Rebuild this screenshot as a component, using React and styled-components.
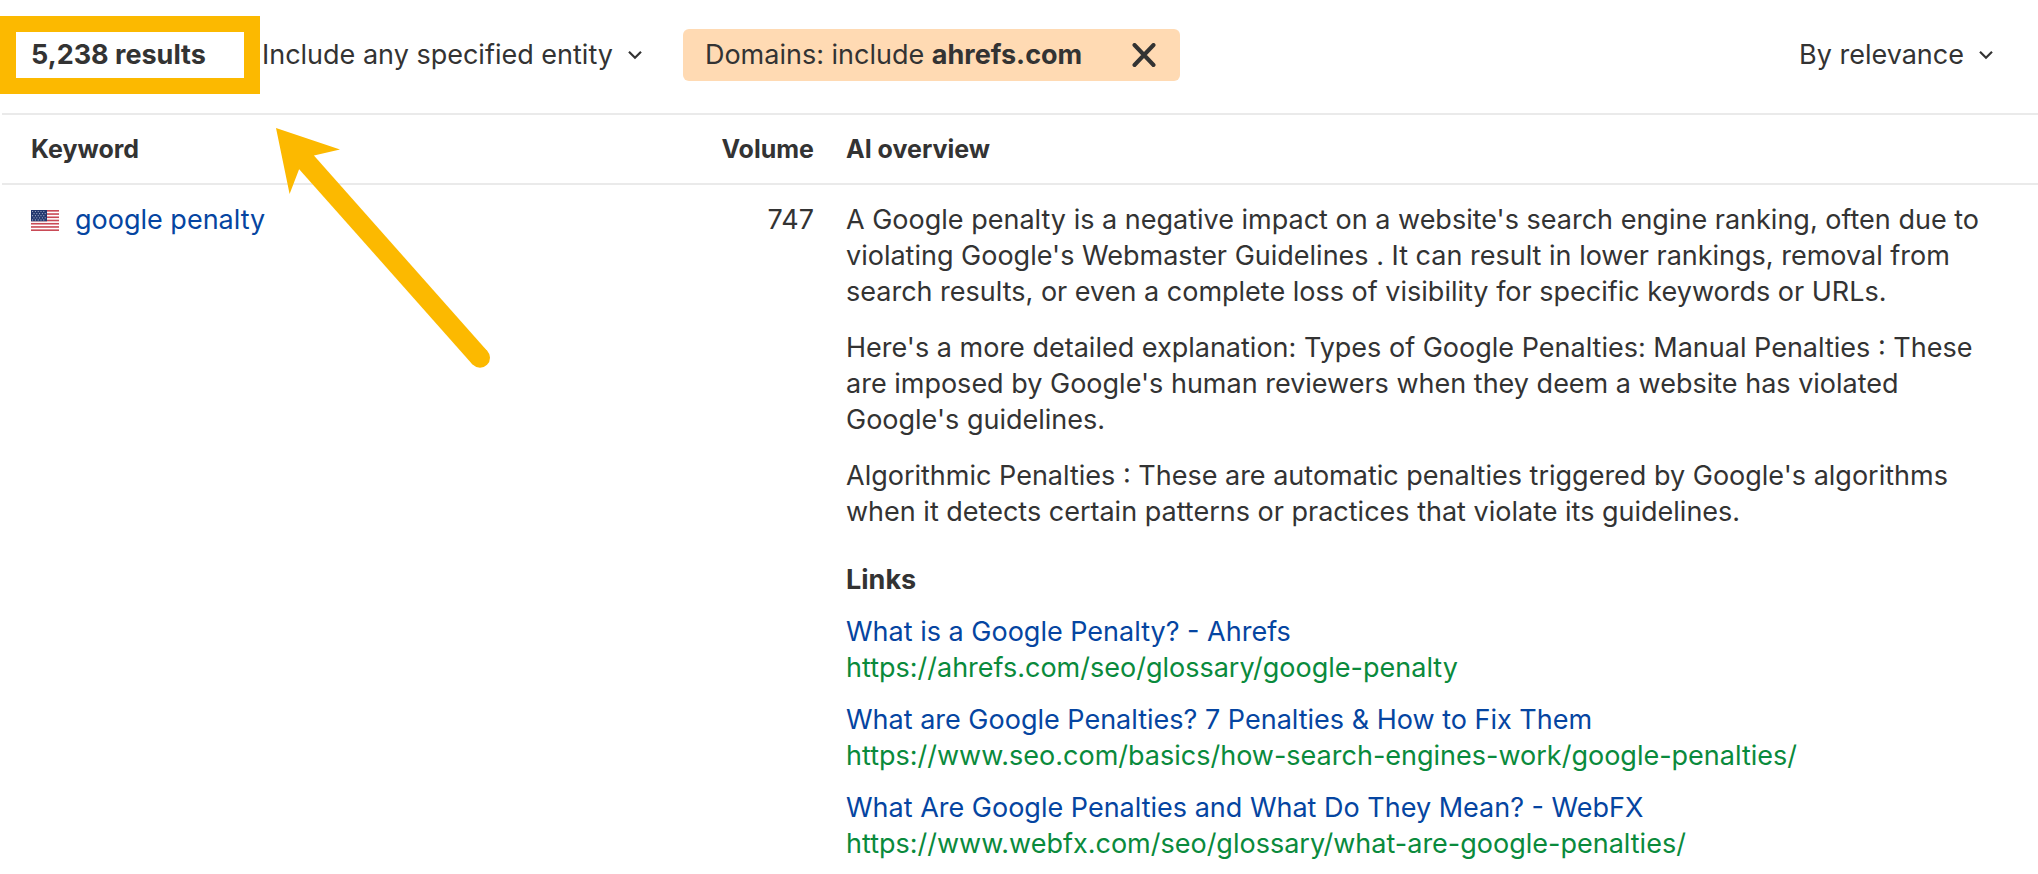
import React from "react";
import styled, { createGlobalStyle } from "styled-components";

const links = [
  {
    title: "What is a Google Penalty? - Ahrefs",
    url: "https://ahrefs.com/seo/glossary/google-penalty",
  },
  {
    title: "What are Google Penalties? 7 Penalties & How to Fix Them",
    url: "https://www.seo.com/basics/how-search-engines-work/google-penalties/",
  },
  {
    title: "What Are Google Penalties and What Do They Mean? - WebFX",
    url: "https://www.webfx.com/seo/glossary/what-are-google-penalties/",
  },
];

const overview = [
  "A Google penalty is a negative impact on a website's search engine ranking, often due to violating Google's Webmaster Guidelines . It can result in lower rankings, removal from search results, or even a complete loss of visibility for specific keywords or URLs.",
  "Here's a more detailed explanation: Types of Google Penalties: Manual Penalties : These are imposed by Google's human reviewers when they deem a website has violated Google's guidelines.",
  "Algorithmic Penalties : These are automatic penalties triggered by Google's algorithms when it detects certain patterns or practices that violate its guidelines.",
];

const Dropdown = ({ label, value }) => (
  <SelectWrap>
    <Select aria-label={label} defaultValue={value}>
      <option>{value}</option>
    </Select>
    <Chevron width="16" height="10" viewBox="0 0 16 10" aria-hidden="true">
      <path
        d="M2 1.8 L8 7.8 L14 1.8"
        fill="none"
        stroke="#333"
        strokeWidth="2.2"
      />
    </Chevron>
  </SelectWrap>
);

const UsFlag = () => (
  <Flag width="28" height="21" viewBox="0 0 28 21" role="img" aria-label="US">
    <rect width="28" height="21" fill="#fff" />
    {[0, 1, 2, 3, 4, 5, 6].map((i) => (
      <rect key={i} y={i * 3.23} width="28" height="1.62" fill="#c94a56" />
    ))}
    <rect width="16" height="11.3" fill="#22386f" />
    {[1.5, 3.6, 5.7, 7.8, 9.9].map((y, row) =>
      [1.6, 4.4, 7.2, 10, 12.8].map((x) => (
        <circle
          key={`${x}-${y}`}
          cx={x + (row % 2) * 1.4}
          cy={y}
          r="0.6"
          fill="#a9b3cc"
        />
      ))
    )}
  </Flag>
);

const App = () => {
  return (
    <Page>
      <GlobalStyle />
      <Toolbar>
        <ResultCount>5,238 results</ResultCount>
        <Dropdown label="Entity filter" value="Include any specified entity" />
        <Chip>
          <span>
            Domains: include <b>ahrefs.com</b>
          </span>
          <CloseButton type="button" aria-label="Remove filter">
            <svg width="24" height="24" viewBox="0 0 24 24">
              <path
                d="M2.5 2 L21.5 22 M21.5 2 L2.5 22"
                stroke="#333"
                strokeWidth="4"
                strokeLinecap="round"
              />
            </svg>
          </CloseButton>
        </Chip>
        <SortBox>
          <Dropdown label="Sort" value="By relevance" />
        </SortBox>
      </Toolbar>

      <Table>
        <thead>
          <tr>
            <HeadCell $width="688px">Keyword</HeadCell>
            <HeadCell $width="140px" $align="right">
              Volume
            </HeadCell>
            <HeadCell>AI overview</HeadCell>
          </tr>
        </thead>
        <tbody>
          <tr>
            <Cell>
              <Keyword>
                <UsFlag />
                <TitleLink href="#">google penalty</TitleLink>
              </Keyword>
            </Cell>
            <Cell $align="right">747</Cell>
            <Cell>
              {overview.map((text) => (
                <Paragraph key={text}>{text}</Paragraph>
              ))}
              <LinksTitle>Links</LinksTitle>
              <LinkList>
                {links.map((link) => (
                  <li key={link.url}>
                    <TitleLink href={link.url}>{link.title}</TitleLink>
                    <UrlLink href={link.url}>{link.url}</UrlLink>
                  </li>
                ))}
              </LinkList>
            </Cell>
          </tr>
        </tbody>
      </Table>

      <Arrow width="220" height="250" viewBox="0 0 220 250" aria-hidden="true">
        <path d="M6 8 L70 29.5 L44 35.5 L29 49.5 L19.6 74 Z" fill="#fcb900" />
        <path
          d="M34 39.5 L210 237.8"
          stroke="#fcb900"
          strokeWidth="20"
        />
        <circle cx="210" cy="237.8" r="10" fill="#fcb900" />
      </Arrow>
    </Page>
  );
};

export default App;

const GlobalStyle = createGlobalStyle`
  body {
    margin: 0;
    background: #fff;
    color: #333;
    font-family: Inter, "Liberation Sans", sans-serif;
    font-size: 27px;
    line-height: 36px;
  }

  * {
    box-sizing: border-box;
  }
`;

const Page = styled.main`
  position: relative;
`;

const Toolbar = styled.div`
  display: flex;
  align-items: center;
  padding: 16px 44px 19px 0;
`;

const ResultCount = styled.div`
  padding: 5px 38px 5px 15px;
  border: 16px solid #fcb900;
  font-weight: 700;
  white-space: nowrap;
`;

const SelectWrap = styled.div`
  display: grid;
  align-items: center;
  margin-left: 2px;
`;

const Select = styled.select`
  grid-area: 1 / 1;
  appearance: none;
  margin: 0;
  padding: 0 30px 0 0;
  border: none;
  background: transparent;
  color: inherit;
  font: inherit;
  cursor: pointer;
`;

const Chevron = styled.svg`
  grid-area: 1 / 1;
  justify-self: end;
  pointer-events: none;
`;

const Chip = styled.div`
  display: flex;
  align-items: center;
  gap: 50px;
  margin-left: 40px;
  padding: 8px 24px 8px 22px;
  border-radius: 6px;
  background: #ffdab3;
  white-space: nowrap;
`;

const CloseButton = styled.button`
  display: flex;
  padding: 0;
  border: none;
  background: none;
  cursor: pointer;
`;

const SortBox = styled.div`
  margin-left: auto;
`;

const Table = styled.table`
  width: calc(100% - 2px);
  margin-left: 2px;
  border-collapse: separate;
  border-spacing: 0;
  table-layout: fixed;
`;

const HeadCell = styled.th`
  width: ${(props) => props.$width || "auto"};
  padding: 16px;
  border-top: 2px solid #eaeaea;
  border-bottom: 2px solid #eaeaea;
  font-size: 25px;
  font-weight: 700;
  text-align: ${(props) => props.$align || "left"};

  &:first-child {
    padding-left: 29px;
  }
`;

const Cell = styled.td`
  padding: 17px 16px;
  vertical-align: top;
  text-align: ${(props) => props.$align || "left"};

  &:first-child {
    padding-left: 29px;
  }

  &:last-child {
    padding-right: 28px;
  }
`;

const Keyword = styled.div`
  display: flex;
  align-items: center;
  gap: 16px;
`;

const Flag = styled.svg`
  flex: none;
`;

const Paragraph = styled.p`
  margin: 0 0 20px;
`;

const LinksTitle = styled.h3`
  margin: 32px 0 16px;
  font-size: 27px;
  font-weight: 700;
`;

const LinkList = styled.ul`
  display: flex;
  flex-direction: column;
  gap: 16px;
  margin: 0;
  padding: 0;
  list-style: none;
`;

const TitleLink = styled.a`
  display: block;
  color: #0545a1;
  text-decoration: none;

  &:hover {
    text-decoration: underline;
  }
`;

const UrlLink = styled(TitleLink)`
  color: #0a8a3c;
`;

// callout arrow that lies over the table, pointing at the result count
const Arrow = styled.svg`
  position: absolute;
  top: 120px;
  left: 270px;
  pointer-events: none;
`;
